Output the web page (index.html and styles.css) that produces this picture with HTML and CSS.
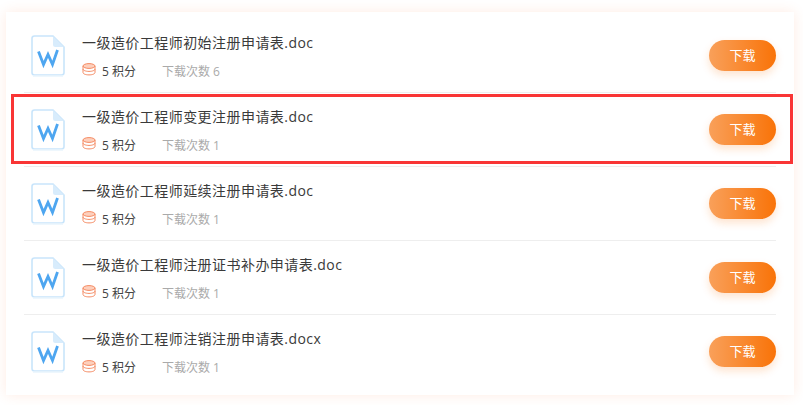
FILE: index.html
```html
<!DOCTYPE html>
<html>

<head>
    <title>Downloads</title>
    <meta charset="UTF-8">
    <link rel="stylesheet" href="styles.css">
</head>

<body>
    <svg class="icon-defs" width="0" height="0">
        <symbol id="word-icon" viewBox="0 0 34 42">
            <path d="M3.500 1H22L33 12V37.500Q33 40 30.500 40H3.500Q1 40 1 37.500V3.500Q1 1 3.500 1Z" fill="#fff" stroke="#c9e5fb" stroke-width="1.600" />
            <path d="M22 1V9.500Q22 12 24.500 12H33Z" fill="#d8ecfc" />
            <path d="M2 41H32" stroke="#e9f4fd" stroke-width="1.500" />
            <path d="M7.500 16.500L12.500 29.500L17 19.500L21.500 29.500L26.500 15" fill="none" stroke="#4ea6f0" stroke-width="2.800" />
        </symbol>
        <symbol id="coin-icon" viewBox="0 0 14 13">
            <ellipse cx="7" cy="3" rx="6" ry="2.400" fill="#fdd0bd" stroke="#f58a62" stroke-width="1" />
            <path d="M1 3V6C1 7.400 3.700 8.400 7 8.400S13 7.400 13 6V3" fill="none" stroke="#f58a62" stroke-width="1" />
            <path d="M1 6V9.500C1 10.900 3.700 11.900 7 11.900S13 10.900 13 9.500V6" fill="none" stroke="#f58a62" stroke-width="1" />
        </symbol>
    </svg>

    <div class="file-card">
        <div class="file-row">
            <svg class="file-icon"><use href="#word-icon" /></svg>
            <div class="file-info">
                <div class="file-name">一级造价工程师初始注册申请表.doc</div>
                <div class="file-meta">
                    <svg class="coin-icon"><use href="#coin-icon" /></svg>
                    <span class="points">5 积分</span>
                    <span class="count">下载次数 6</span>
                </div>
            </div>
            <a class="download-btn">下载</a>
        </div>
        <div class="file-row">
            <svg class="file-icon"><use href="#word-icon" /></svg>
            <div class="file-info">
                <div class="file-name">一级造价工程师变更注册申请表.doc</div>
                <div class="file-meta">
                    <svg class="coin-icon"><use href="#coin-icon" /></svg>
                    <span class="points">5 积分</span>
                    <span class="count">下载次数 1</span>
                </div>
            </div>
            <a class="download-btn">下载</a>
            <div class="highlight-box"></div>
        </div>
        <div class="file-row">
            <svg class="file-icon"><use href="#word-icon" /></svg>
            <div class="file-info">
                <div class="file-name">一级造价工程师延续注册申请表.doc</div>
                <div class="file-meta">
                    <svg class="coin-icon"><use href="#coin-icon" /></svg>
                    <span class="points">5 积分</span>
                    <span class="count">下载次数 1</span>
                </div>
            </div>
            <a class="download-btn">下载</a>
        </div>
        <div class="file-row">
            <svg class="file-icon"><use href="#word-icon" /></svg>
            <div class="file-info">
                <div class="file-name">一级造价工程师注册证书补办申请表.doc</div>
                <div class="file-meta">
                    <svg class="coin-icon"><use href="#coin-icon" /></svg>
                    <span class="points">5 积分</span>
                    <span class="count">下载次数 1</span>
                </div>
            </div>
            <a class="download-btn">下载</a>
        </div>
        <div class="file-row">
            <svg class="file-icon"><use href="#word-icon" /></svg>
            <div class="file-info">
                <div class="file-name">一级造价工程师注销注册申请表.docx</div>
                <div class="file-meta">
                    <svg class="coin-icon"><use href="#coin-icon" /></svg>
                    <span class="points">5 积分</span>
                    <span class="count">下载次数 1</span>
                </div>
            </div>
            <a class="download-btn">下载</a>
        </div>
    </div>
</body>

</html>
```

FILE: styles.css
```css
body {
    font-family: "Open Sans", "Noto Sans CJK SC", sans-serif;
    margin: 0;
    padding: 12px 9px 0 6px;
    height: 405px;
    box-sizing: border-box;
    overflow: hidden;
    background-color: #fff;
    color: #333;
}

.icon-defs {
    position: absolute;
}

.file-card {
    padding: 7px 18px 6px;
    background-color: #fff;
    box-shadow: 0 0 12px rgba(255, 120, 60, 0.14);
}

.file-row {
    position: relative;
    display: flex;
    align-items: center;
    height: 74px;
    box-sizing: border-box;
    border-bottom: 1px solid #eee;
    padding-left: 7px;
}

.file-row:last-child {
    border-bottom: none;
}

.file-icon {
    width: 34px;
    height: 42px;
    margin-right: 17px;
    flex-shrink: 0;
}

.file-info {
    flex-grow: 1;
    padding-top: 2px;
}

.file-name {
    font-size: 14px;
    line-height: 20px;
    letter-spacing: 0.45px;
    color: #3a3a3a;
}

.file-meta {
    display: flex;
    align-items: center;
    margin-top: 10px;
    font-size: 12px;
    line-height: 18px;
}

.coin-icon {
    width: 14px;
    height: 13px;
    margin-right: 6px;
    position: relative;
    top: -2px;
}

.points {
    width: 60px;
    color: #444;
}

.count {
    color: #aaa;
}

.download-btn {
    width: 67px;
    height: 31px;
    line-height: 31px;
    margin-bottom: 1px;
    text-align: center;
    border-radius: 16px;
    font-size: 13px;
    color: #fff;
    background: linear-gradient(90deg, #f9a05a, #f97308);
    box-shadow: 0 4px 8px rgba(249, 115, 8, 0.2);
}

.highlight-box {
    position: absolute;
    left: -13px;
    right: -17px;
    top: 1px;
    bottom: 2px;
    border: 3px solid #f93535;
}
```
